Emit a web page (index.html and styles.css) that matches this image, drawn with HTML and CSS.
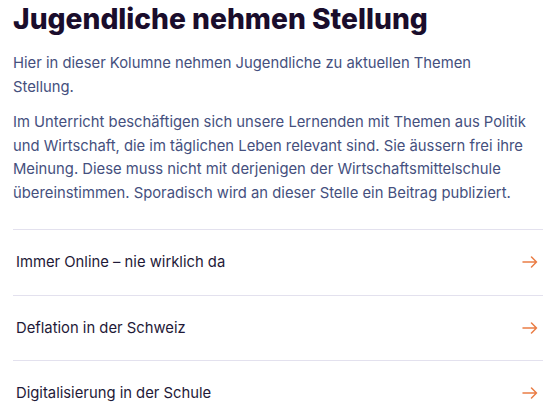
FILE: index.html
```html
<!DOCTYPE html>
<html lang="de">
<head>
<meta charset="utf-8">
<title>Jugendliche nehmen Stellung</title>
<link rel="stylesheet" href="styles.css">
</head>
<body>
<main class="page">
  <h1 class="title">Jugendliche nehmen Stellung</h1>
  <p class="lead">Hier in dieser Kolumne nehmen Jugendliche zu aktuellen Themen Stellung.</p>
  <p class="text">Im Unterricht beschäftigen sich unsere Lernenden mit Themen aus Politik und Wirtschaft, die im täglichen Leben relevant sind. Sie äussern frei ihre Meinung. Diese muss nicht mit derjenigen der Wirtschaftsmittelschule übereinstimmen. Sporadisch wird an dieser Stelle ein Beitrag publiziert.</p>
  <ul class="list">
    <li class="item"><a class="link" href="#"><span>Immer Online – nie wirklich da</span><svg class="arrow" viewBox="0 0 16 12" width="16" height="12"><path d="M1 6H14.5M9.5 1L14.5 6L9.5 11" fill="none" stroke="currentColor" stroke-width="1.5" stroke-linecap="round" stroke-linejoin="round"/></svg></a></li>
    <li class="item"><a class="link" href="#"><span>Deflation in der Schweiz</span><svg class="arrow" viewBox="0 0 16 12" width="16" height="12"><path d="M1 6H14.5M9.5 1L14.5 6L9.5 11" fill="none" stroke="currentColor" stroke-width="1.5" stroke-linecap="round" stroke-linejoin="round"/></svg></a></li>
    <li class="item"><a class="link" href="#"><span>Digitalisierung in der Schule</span><svg class="arrow" viewBox="0 0 16 12" width="16" height="12"><path d="M1 6H14.5M9.5 1L14.5 6L9.5 11" fill="none" stroke="currentColor" stroke-width="1.5" stroke-linecap="round" stroke-linejoin="round"/></svg></a></li>
  </ul>
</main>
</body>
</html>
```
FILE: styles.css
```css
* { box-sizing: border-box; }
html, body { margin: 0; padding: 0; background: #fff; }
body { font-family: Inter, "Noto Sans", sans-serif; }
.page { padding: 0 17px 0 13px; }
.title {
  margin: 0;
  font-size: 28.2px;
  line-height: 38px;
  font-weight: 800;
  color: #1a0d2c;
}
.lead, .text {
  margin: 0;
  max-width: 518px;
  font-size: 14.8px;
  line-height: 23.5px;
  color: #45507e;
}
.lead { margin-top: 14px; }
.text { margin-top: 12px; }
.list { list-style: none; margin: 24px 0 0; padding: 0; }
.item { border-top: 1.5px solid #e3e1ee; }
.link {
  display: flex;
  align-items: center;
  justify-content: space-between;
  height: 64.5px;
  padding: 0 5px 0 3px;
  color: #1f1a38;
  text-decoration: none;
  font-size: 14.8px;
}
.arrow { color: #ea7d45; flex: none; }
```
